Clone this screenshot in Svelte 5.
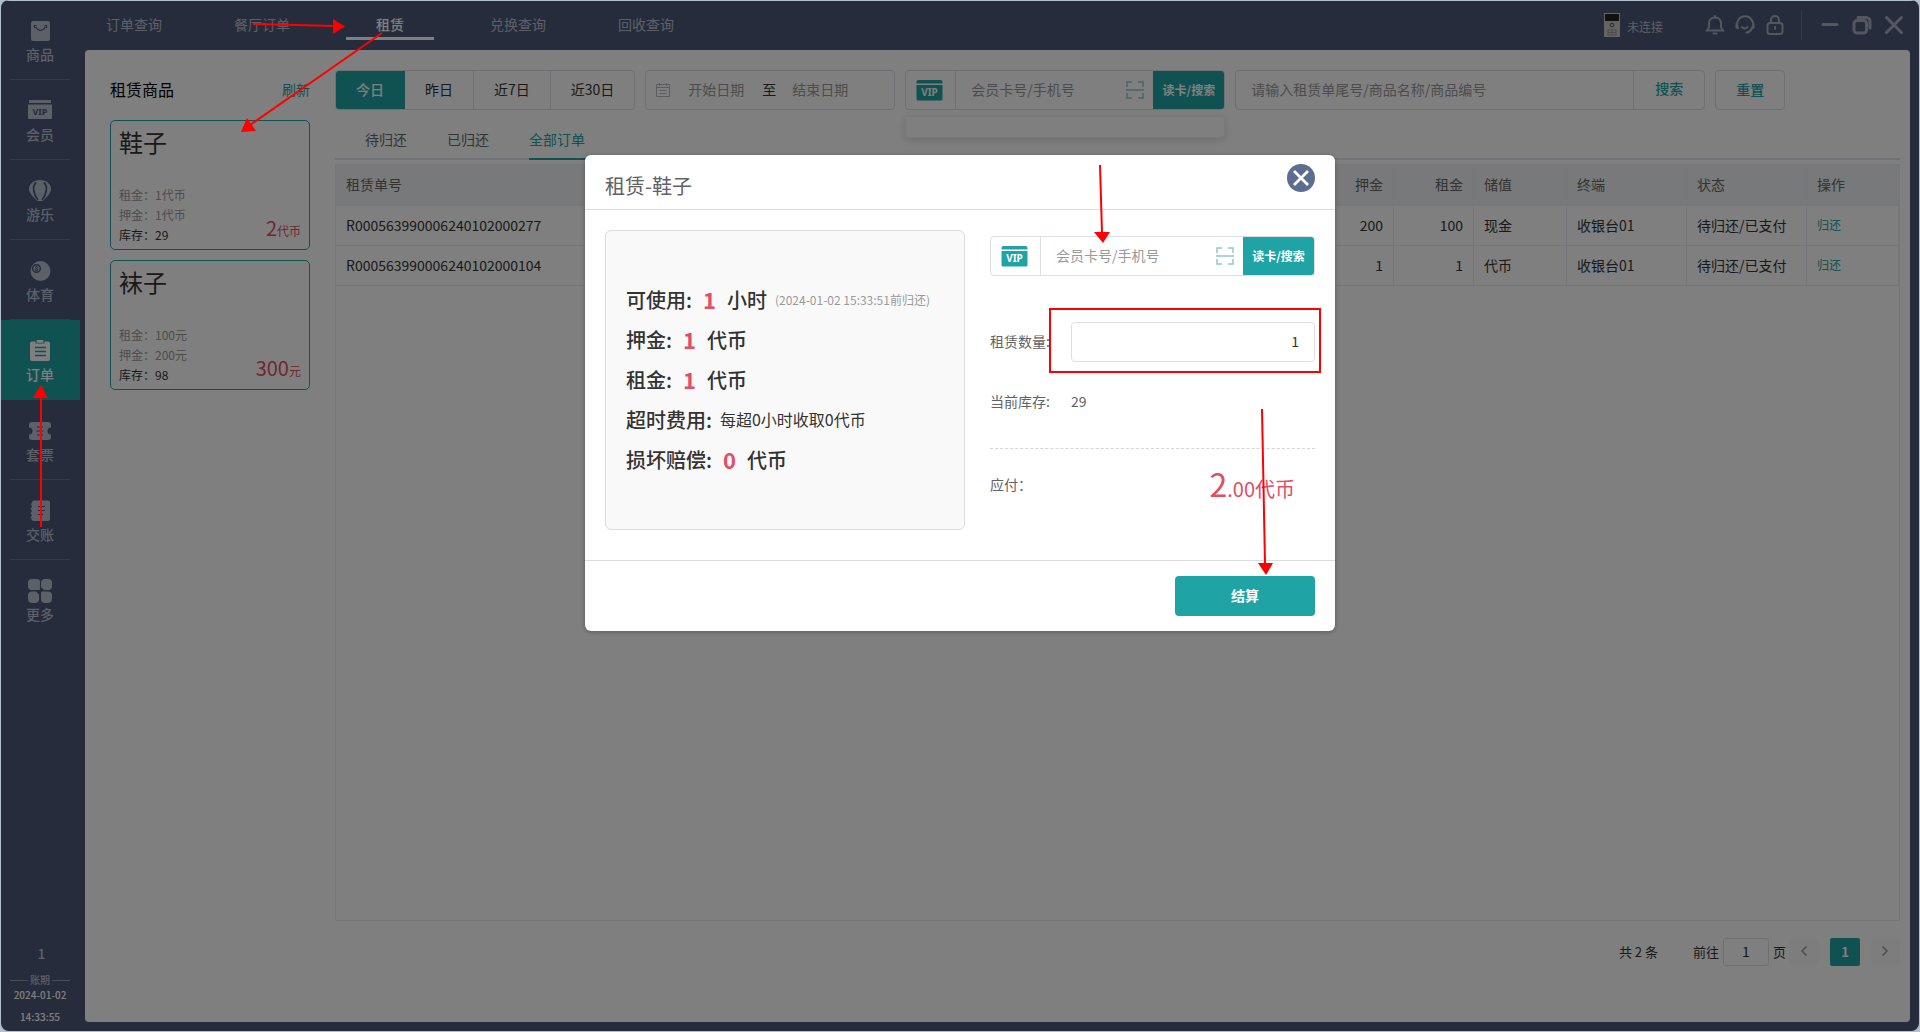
<script>
  const menu = [
    { icon: "goods", label: "商品" },
    { icon: "vip", label: "会员" },
    { icon: "balloon", label: "游乐" },
    { icon: "ball", label: "体育" },
    { icon: "order", label: "订单" },
    { icon: "ticket", label: "套票" },
    { icon: "ledger", label: "交账" },
    { icon: "more", label: "更多" },
  ];
  const navTabs = ["订单查询", "餐厅订单", "租赁", "兑换查询", "回收查询"];
  const ranges = ["今日", "昨日", "近7日", "近30日"];
  const statusTabs = ["待归还", "已归还", "全部订单"];

  const goods = [
    { name: "鞋子", rent: "1代币", deposit: "1代币", stock: 29, total: 2, unit: "代币" },
    { name: "袜子", rent: "100元", deposit: "200元", stock: 98, total: 300, unit: "元" },
  ];

  const orders = [
    { no: "R000563990006240102000277", deposit: 200, rent: 100, store: "现金", terminal: "收银台01", status: "待归还/已支付" },
    { no: "R000563990006240102000104", deposit: 1, rent: 1, store: "代币", terminal: "收银台01", status: "待归还/已支付" },
  ];

  const terms = [
    { label: "可使用:", value: 1, unit: "小时", hint: "(2024-01-02 15:33:51前归还)" },
    { label: "押金:", value: 1, unit: "代币" },
    { label: "租金:", value: 1, unit: "代币" },
    { label: "超时费用:", text: "每超0小时收取0代币" },
    { label: "损坏赔偿:", value: 0, unit: "代币" },
  ];

  let activeMenu = $state("订单");
  let activeNav = $state("租赁");
  let activeRange = $state("今日");
  let activeStatus = $state("全部订单");
  let quantity = $state(1);
  let pageNo = $state(1);
  let open = $state(true);
</script>

{#snippet menuIcon(name)}
  <svg width="26" height="26" viewBox="0 0 26 26" fill="currentColor" aria-hidden="true">
    {#if name === "goods"}
      <rect x="4" y="3" width="19" height="20" rx="2" />
      <g fill="none" stroke="#4c5878" stroke-width="1.2">
        <path d="M8.5 9Q13.5 16 18.5 9" />
        <path d="M7.5 10v-2.5h2M17.5 7.500h2v2.500" />
      </g>
    {:else if name === "vip"}
      <path d="M2 3a1 1 0 0 1 1-1h20a1 1 0 0 1 1 1v2H2z" />
      <path d="M1 6.500h24V20a1 1 0 0 1-1 1H2a1 1 0 0 1-1-1z" />
      <text x="13" y="17" text-anchor="middle" class="vip-dark">VIP</text>
    {:else if name === "balloon"}
      <path d="M13 2c6.500 0 11 4 11 9 0 4-4 8-8.500 12h-5C6 19 2 15 2 11c0-5 4.500-9 11-9z" />
      <path d="M9 4.500C4.500 9 7 17 11 22M17 4.500C21.500 9 19 17 15 22" fill="none" stroke="#4c5878" stroke-width="1.8" />
    {:else if name === "ball"}
      <circle cx="13.5" cy="13" r="10" />
      <circle cx="9.5" cy="10.5" r="3.8" fill="none" stroke="#4c5878" stroke-width="1.5" />
      <circle cx="9.5" cy="9.5" r="1" fill="none" stroke="#4c5878" />
      <circle cx="9.5" cy="11.8" r="1" fill="none" stroke="#4c5878" />
    {:else if name === "order"}
      <path d="M5 3.500h3.500v2h9v-2H21a2 2 0 0 1 2 2V21a2 2 0 0 1-2 2H5a2 2 0 0 1-2-2V5.500a2 2 0 0 1 2-2z" />
      <rect x="9.5" y="2" width="7" height="2.8" rx="1" />
      <path d="M8 9.500h11M8 13.500h11M8 17.500h11" stroke="#20a3a5" stroke-width="1.4" />
    {:else if name === "ticket"}
      <path d="M5 4h16a3 3 0 0 1 3 3v2.500a3.500 3.500 0 0 0 0 7V19a3 3 0 0 1-3 3H5a3 3 0 0 1-3-3v-2.500a3.500 3.500 0 0 0 0-7V7a3 3 0 0 1 3-3z" />
      <path d="M10 9h6M9.500 13h7M10 17h6" stroke="#4c5878" stroke-width="1.2" />
    {:else if name === "ledger"}
      <path d="M7 2.500h14a2 2 0 0 1 2 2V21a2 2 0 0 1-2 2H7a2.500 2.500 0 0 1-2.500-2.500l-1-1 1.500-2-1.500-2 1.500-2.500-1.500-2 1.500-2.500-1-2L5 4.500a2 2 0 0 1 2-2z" />
      <path d="M11 8.500h7M11 12.500h7M11 16.500h5" stroke="#4c5878" stroke-width="1.2" />
    {:else}
      <path d="M5 1h5a3 3 0 0 1 3 3v7a1 1 0 0 1-1 1H5a4 4 0 0 1-4-4V5a4 4 0 0 1 4-4z" />
      <path d="M18 1h3a4 4 0 0 1 4 4v3a4 4 0 0 1-4 4h-4l-3-3V5a4 4 0 0 1 4-4z" />
      <path d="M5 13.500h4l3 3V21a4 4 0 0 1-4 4H5a4 4 0 0 1-4-4v-3.500a4 4 0 0 1 4-4z" />
      <path d="M15 13.500h6a4 4 0 0 1 4 4V21a4 4 0 0 1-4 4h-3a4 4 0 0 1-4-4v-6.500z" />
    {/if}
  </svg>
{/snippet}

{#snippet memberSearch()}
  <div class="member">
    <span class="member-vip">
      <svg width="27" height="21" viewBox="0 0 27 21" aria-hidden="true">
        <path d="M2 0h23a2 2 0 0 1 1.500 2v1.500H.5V2A2 2 0 0 1 2 0z" fill="#20a3a5" />
        <path d="M.5 5h26v14a1.500 1.500 0 0 1-1.500 1.500H2A1.500 1.500 0 0 1 .5 19z" fill="#20a3a5" />
        <text x="13.5" y="16" text-anchor="middle" class="vip-light">VIP</text>
      </svg>
    </span>
    <input type="text" placeholder="会员卡号/手机号" aria-label="会员卡号/手机号" />
    <svg class="scan" width="18" height="18" viewBox="0 0 18 18" fill="none" stroke="#90c8c9" stroke-width="1.5" aria-hidden="true">
      <path d="M1 6V1h5M12 1h5v5M17 12v5h-5M6 17H1v-5M0 9h18" />
    </svg>
    <button class="read-card">读卡/搜索</button>
  </div>
{/snippet}

<div class="window">
  <aside class="sidebar">
    <nav class="menu">
      {#each menu as item (item.label)}
        <button class="menu-item" class:active={item.label === activeMenu} onclick={() => (activeMenu = item.label)}>
          {@render menuIcon(item.icon)}
          <span>{item.label}</span>
        </button>
      {/each}
    </nav>
    <div class="period">
      <span class="period-no">1</span>
      <span class="period-title">账期</span>
      <span class="period-date">2024-01-02</span>
      <span class="period-time">14:33:55</span>
    </div>
  </aside>

  <div class="body">
    <header class="topbar">
      <nav class="nav">
        {#each navTabs as tab (tab)}
          <button class="nav-tab" class:active={tab === activeNav} onclick={() => (activeNav = tab)}>{tab}</button>
        {/each}
      </nav>
      <div class="device">
        <svg width="16" height="24" viewBox="0 0 16 24" aria-hidden="true">
          <rect width="16" height="24" fill="#c8c8c4" />
          <rect x="1" y="1" width="14" height="7" fill="#222" />
          <circle cx="8" cy="12" r="1.8" fill="none" stroke="#555" />
          <rect x="4" y="17" width="8" height="5" fill="none" stroke="#999" />
          <path d="M4 19.500h8M8 17v5" stroke="#999" />
        </svg>
        <span>未连接</span>
      </div>
      <div class="tools">
        <button aria-label="通知">
          <svg width="20" height="20" viewBox="0 0 20 20">
            <path d="M10 2.500c-3.800 0-6 2.600-6 6v3.800L2 15.500h16l-2-3.200V8.500c0-3.400-2.200-6-6-6zM10 1v1M8.500 18.500h3" />
          </svg>
        </button>
        <button aria-label="客服">
          <svg width="20" height="20" viewBox="0 0 20 20">
            <path d="M3 13a8 8 0 1 1 14.200 0c-1.200 2.600-3 4.200-5.700 4.800M1.500 9v3.500L3 13M18.500 9v3.500L17.200 13M7 12c1.500 2 4 2 5.500 0" />
          </svg>
        </button>
        <button aria-label="锁屏">
          <svg width="20" height="20" viewBox="0 0 20 20">
            <rect x="2.5" y="8" width="15" height="11" rx="2.5" />
            <path d="M6 8V5a4 4 0 0 1 8 0v3M10 12v2" />
          </svg>
        </button>
      </div>
      <div class="controls">
        <button aria-label="最小化">
          <svg width="20" height="20" viewBox="0 0 20 20"><path d="M3 9.500h14" /></svg>
        </button>
        <button aria-label="还原">
          <svg width="20" height="20" viewBox="0 0 20 20">
            <rect x="2" y="5.5" width="12.5" height="12.5" rx="3" />
            <path d="M6 2.500h8A4 4 0 0 1 18 6.500V13" />
          </svg>
        </button>
        <button aria-label="关闭窗口">
          <svg width="20" height="20" viewBox="0 0 20 20"><path d="M2.500 2.500l15 15M17.500 2.500l-15 15" /></svg>
        </button>
      </div>
    </header>

    <main class="panel">
      <section class="goods">
        <div class="goods-head">
          <h2>租赁商品</h2>
          <button class="link">刷新</button>
        </div>
        {#each goods as item (item.name)}
          <button class="goods-card">
            <span class="goods-name">{item.name}</span>
            <span class="goods-foot">
              <span class="goods-info">
                <span>租金：{item.rent}</span>
                <span>押金：{item.deposit}</span>
                <span class="stock">库存：{item.stock}</span>
              </span>
              <span class="goods-price"><b>{item.total}</b>{item.unit}</span>
            </span>
          </button>
        {/each}
      </section>

      <section class="orders">
        <div class="filters">
          <div class="ranges">
            {#each ranges as range (range)}
              <button class:active={range === activeRange} onclick={() => (activeRange = range)}>{range}</button>
            {/each}
          </div>
          <div class="dates">
            <svg width="14" height="14" viewBox="0 0 14 14" fill="none" stroke="#b4b8c0" aria-hidden="true">
              <path d="M.5 1.500h13v12H.5zM.5 4.500h13M3.500 0v3M10.500 0v3M3.500 7.500h7M3.500 10.500h7" />
            </svg>
            <input type="text" placeholder="开始日期" aria-label="开始日期" />
            <span>至</span>
            <input type="text" placeholder="结束日期" aria-label="结束日期" />
          </div>
          <div class="member-box">
            {@render memberSearch()}
            <div class="suggestions"></div>
          </div>
          <div class="keyword">
            <input type="text" placeholder="请输入租赁单尾号/商品名称/商品编号" aria-label="关键字" />
            <button>搜索</button>
          </div>
          <button class="reset">重置</button>
        </div>

        <div class="status-tabs">
          {#each statusTabs as tab (tab)}
            <button class:active={tab === activeStatus} onclick={() => (activeStatus = tab)}>{tab}</button>
          {/each}
        </div>

        <div class="table-wrap">
          <table>
            <colgroup>
              <col />
              <col class="w80" />
              <col class="w80" />
              <col class="w93" />
              <col class="w120" />
              <col class="w120" />
              <col class="w92" />
            </colgroup>
            <thead>
              <tr>
                <th>租赁单号</th>
                <th class="num">押金</th>
                <th class="num">租金</th>
                <th>储值</th>
                <th>终端</th>
                <th>状态</th>
                <th>操作</th>
              </tr>
            </thead>
            <tbody>
              {#each orders as order (order.no)}
                <tr>
                  <td>{order.no}</td>
                  <td class="num">{order.deposit}</td>
                  <td class="num">{order.rent}</td>
                  <td>{order.store}</td>
                  <td>{order.terminal}</td>
                  <td>{order.status}</td>
                  <td><button class="link small">归还</button></td>
                </tr>
              {/each}
            </tbody>
          </table>
        </div>

        <div class="pager">
          <span class="total">共 2 条</span>
          <label for="page-no">前往</label>
          <input id="page-no" type="text" bind:value={pageNo} />
          <span>页</span>
          <button class="step prev" aria-label="上一页">
            <svg width="8" height="12" viewBox="0 0 8 12"><path d="M6.500 1.500L2 6l4.500 4.500" /></svg>
          </button>
          <button class="current">1</button>
          <button class="step" aria-label="下一页">
            <svg width="8" height="12" viewBox="0 0 8 12"><path d="M1.500 1.500L6 6l-4.500 4.500" /></svg>
          </button>
        </div>
      </section>
    </main>
  </div>

  {#if open}
    <div class="mask">
      <div class="dialog" role="dialog" aria-labelledby="dialog-title">
        <div class="dialog-head">
          <h1 id="dialog-title">租赁-鞋子</h1>
          <button class="close" aria-label="关闭" onclick={() => (open = false)}>
            <svg width="28" height="28" viewBox="0 0 28 28" fill="none" stroke="#fff" stroke-width="2.8">
              <path d="M7 7l14 14M21 7L7 21" />
            </svg>
          </button>
        </div>
        <div class="dialog-body">
          <div class="terms">
            {#each terms as term (term.label)}
              <div class="term">
                <span>{term.label}</span>
                {#if term.text}
                  <span class="term-text">{term.text}</span>
                {:else}
                  <span class="term-value">{term.value}</span>
                  <span>{term.unit}</span>
                {/if}
                {#if term.hint}
                  <span class="term-hint">{term.hint}</span>
                {/if}
              </div>
            {/each}
          </div>
          <div class="form">
            {@render memberSearch()}
            <div class="field qty">
              <label for="quantity">租赁数量:</label>
              <input id="quantity" type="text" bind:value={quantity} />
            </div>
            <div class="field stock-row">
              <span class="field-name">当前库存:</span>
              <span class="field-value">29</span>
            </div>
            <div class="payable">
              <span>应付：</span>
              <span class="amount"><b>2</b>.00代币</span>
            </div>
          </div>
        </div>
        <div class="dialog-foot">
          <button class="settle">结算</button>
        </div>
      </div>
    </div>
  {/if}
</div>

<svg class="marks" aria-hidden="true">
  <g stroke="#f00" stroke-width="2" fill="none">
    <path d="M253 24L335 26" />
    <path d="M382 33L250 125" />
    <path d="M41 527V396" />
    <path d="M1100 165L1102 233" />
    <path d="M1262 409L1265 564" />
    <rect x="1050" y="309" width="270" height="63" />
  </g>
  <g fill="#f00">
    <path d="M333 19L345 26.500L333 34z" />
    <path d="M247 118L256 131L241 132z" />
    <path d="M33 398L41 385L48 398z" />
    <path d="M1094 232H1110L1103 243z" />
    <path d="M1258 563H1273L1266 575z" />
  </g>
</svg>

<style>
  :global(body) {
    margin: 0;
    background: #b4bfce;
    font-family: "Noto Sans CJK SC", "Noto Sans", sans-serif;
    font-size: 14px;
    color: #333;
  }

  button,
  input {
    font-family: inherit;
    font-size: inherit;
    color: inherit;
    margin: 0;
    padding: 0 0 2px;
    border: none;
    background: none;
    box-sizing: border-box;
    outline: none;
  }

  button {
    cursor: pointer;
  }

  input {
    min-width: 0;
  }

  input::placeholder {
    color: #999;
    opacity: 1;
  }

  .window {
    position: relative;
    display: flex;
    min-height: calc(100vh - 1px);
    margin: 0 1px;
    border-radius: 8px;
    background: #4c5878;
    overflow: hidden;
  }

  /* sidebar */
  .sidebar {
    display: flex;
    flex-direction: column;
    justify-content: space-between;
    width: 79px;
    color: #b8c0d0;
  }

  .menu {
    display: flex;
    flex-direction: column;
  }

  .menu-item {
    position: relative;
    display: flex;
    flex-direction: column;
    align-items: center;
    width: 100%;
    height: 80px;
    padding: 18px 1px 0 0;
    line-height: 20px;
    font-weight: 500;
  }

  .menu-item:not(:last-child)::after {
    content: "";
    position: absolute;
    left: 9px;
    right: 10px;
    bottom: 0;
    height: 1px;
    background: #6d7790;
  }

  .menu-item.active {
    background: #20a3a5;
    color: #fff;
  }

  .menu-item.active::after {
    display: none;
  }

  .vip-dark,
  .vip-light {
    font: 700 9px "Noto Sans", sans-serif;
    fill: #4c5878;
  }

  .vip-light {
    font-size: 10px;
    fill: #fff;
  }

  .period {
    display: flex;
    flex-direction: column;
    align-items: center;
    font-size: 10px;
    font-weight: 500;
    padding: 0 1px 5px 0;
  }

  .period-no {
    font-size: 14px;
    line-height: 20px;
    padding-left: 3px;
    margin-bottom: 11px;
  }

  .period-title {
    display: flex;
    align-items: center;
    gap: 2px;
    width: 60px;
    line-height: 12px;
  }

  .period-title::before,
  .period-title::after {
    content: "";
    flex: 1;
    height: 1px;
    background: #909ab0;
  }

  .period-date,
  .period-time {
    line-height: 18px;
    color: #fff;
  }

  .period-time {
    margin-top: 4px;
  }

  .body {
    flex: 1;
    min-width: 0;
    display: flex;
    flex-direction: column;
    padding: 0 9px 9px 5px;
  }

  /* top bar */
  .topbar {
    display: flex;
    align-items: center;
    height: 50px;
    color: #b8c0d0;
  }

  .nav {
    display: flex;
    gap: 40px;
    flex: 1;
    padding-left: 5px;
  }

  .nav-tab {
    width: 88px;
    height: 30px;
    padding: 1px 0 0;
    border-bottom: 3px solid transparent;
    line-height: 20px;
  }

  .nav-tab.active {
    color: #fff;
    font-weight: 500;
    border-color: #fff;
  }

  .device {
    display: flex;
    align-items: center;
    gap: 7px;
    font-size: 12px;
    margin-right: 42px;
  }

  .device span {
    padding-top: 2px;
  }

  .tools,
  .controls {
    display: flex;
    align-items: center;
    gap: 10px;
    height: 30px;
  }

  .tools button,
  .controls button {
    display: flex;
    padding: 0;
  }

  .tools {
    padding-right: 16px;
    border-right: 1px solid #6d7790;
  }

  .controls {
    gap: 12px;
    padding: 0 6px 0 18px;
  }

  .tools svg,
  .controls svg {
    fill: none;
    stroke: #a8afbf;
    stroke-width: 2;
    stroke-linecap: round;
  }

  .controls svg {
    stroke-width: 3;
  }

  /* content */
  .panel {
    flex: 1;
    display: flex;
    gap: 25px;
    padding: 20px 10px 20px 25px;
    border-radius: 4px;
    background: #fff;
  }

  .goods {
    width: 200px;
    display: flex;
    flex-direction: column;
    gap: 10px;
  }

  .goods-head {
    display: flex;
    align-items: center;
    justify-content: space-between;
    height: 40px;
  }

  h2 {
    margin: 0;
    padding-bottom: 2px;
    font-size: 16px;
    font-weight: 400;
    color: #000;
  }

  .link {
    color: #20a3a5;
  }

  .small {
    font-size: 12px;
  }

  .goods-card {
    display: flex;
    flex-direction: column;
    justify-content: space-between;
    height: 130px;
    padding: 3px 8px 4px;
    border: 1px solid #20a3a5;
    border-radius: 5px;
    text-align: left;
  }

  .goods-name {
    font-size: 24px;
    line-height: 36px;
  }

  .goods-foot {
    display: flex;
    justify-content: space-between;
    align-items: flex-end;
    width: 100%;
    font-size: 12px;
  }

  .goods-info {
    display: flex;
    flex-direction: column;
    line-height: 20px;
    color: #999;
  }

  .stock {
    color: #333;
  }

  .goods-price {
    line-height: 28px;
    color: #e34d65;
  }

  .goods-price b {
    font-size: 20px;
    font-weight: 400;
  }

  .orders {
    flex: 1;
    min-width: 0;
    display: flex;
    flex-direction: column;
  }

  .filters {
    display: flex;
    gap: 10px;
    height: 40px;
  }

  .ranges {
    display: flex;
    border: 1px solid #dcdfe6;
    border-radius: 4px;
    overflow: hidden;
  }

  .ranges button {
    padding: 0 20px 2px;
    border-right: 1px solid #dcdfe6;
  }

  .ranges button:last-child {
    border-right: none;
  }

  .ranges .active {
    background: #20a3a5;
    border-color: #20a3a5;
    color: #fff;
    font-weight: 500;
  }

  .dates {
    display: flex;
    align-items: center;
    width: 250px;
    padding: 0 10px;
    border: 1px solid #dcdfe6;
    border-radius: 4px;
    box-sizing: border-box;
  }

  .dates input {
    width: 86px;
    margin-left: 3px;
    text-align: center;
  }

  .dates input:last-child {
    width: 82px;
    margin-left: 0;
  }

  .dates span {
    width: 20px;
    padding-bottom: 2px;
    text-align: center;
  }

  .member-box {
    position: relative;
    width: 320px;
  }

  .suggestions {
    position: absolute;
    top: 46px;
    left: 0;
    right: 0;
    height: 22px;
    border: 1px solid #f0f2f5;
    border-radius: 4px;
    box-sizing: border-box;
    box-shadow: 0 2px 8px rgba(0, 0, 0, 0.15);
  }

  .member {
    display: flex;
    align-items: center;
    height: 40px;
    border: 1px solid #dcdfe6;
    border-radius: 4px;
    box-sizing: border-box;
    overflow: hidden;
  }

  .member-vip {
    display: flex;
    align-items: center;
    justify-content: center;
    width: 47px;
    height: 100%;
    padding-right: 2px;
    border-right: 1px solid #dcdfe6;
  }

  .member input {
    flex: 1;
    height: 100%;
    padding-left: 15px;
  }

  .scan {
    margin-right: 9px;
  }

  .read-card {
    width: 71px;
    height: 100%;
    background: #20a3a5;
    color: #fff;
    font-size: 12px;
    font-weight: 700;
  }

  .keyword {
    display: flex;
    width: 470px;
    border: 1px solid #dcdfe6;
    border-radius: 4px;
    box-sizing: border-box;
  }

  .keyword input {
    flex: 1;
    padding-left: 15px;
  }

  .keyword button {
    width: 71px;
    padding-bottom: 4px;
    border-left: 1px solid #dcdfe6;
    color: #20a3a5;
    font-weight: 500;
  }

  .reset {
    width: 70px;
    border: 1px solid #dcdfe6;
    border-radius: 4px;
    color: #20a3a5;
    font-weight: 500;
  }

  .status-tabs {
    display: flex;
    gap: 40px;
    height: 50px;
    padding-left: 30px;
    box-shadow: inset 0 -2px #e4e7ed;
  }

  .status-tabs button {
    padding-top: 15px;
    padding-bottom: 6px;
    border-bottom: 2px solid transparent;
    color: #666;
  }

  .status-tabs .active {
    color: #20a3a5;
    border-color: #20a3a5;
  }

  .table-wrap {
    flex: 1;
    margin-top: 4px;
    border: 1px solid #ebeef5;
  }

  table {
    width: 100%;
    border-collapse: collapse;
    table-layout: fixed;
  }

  .w80 {
    width: 80px;
  }

  .w92 {
    width: 92px;
  }

  .w93 {
    width: 93px;
  }

  .w120 {
    width: 120px;
  }

  th,
  td {
    height: 37px;
    padding: 0 10px 2px;
    border-right: 1px solid #ebeef5;
    border-bottom: 1px solid #ebeef5;
    text-align: left;
    font-weight: 400;
  }

  th {
    height: 38px;
    background: #f0f3f7;
    color: #666;
  }

  .num {
    text-align: right;
  }

  .pager {
    display: flex;
    align-items: center;
    height: 28px;
    margin-top: 17px;
    margin-bottom: 36px;
    justify-content: flex-end;
    font-size: 13px;
  }

  .pager span,
  .pager label {
    padding-bottom: 2px;
  }

  .total {
    margin-right: 35px;
  }

  .pager input {
    width: 46px;
    height: 28px;
    margin: 0 4px;
    border: 1px solid #dcdfe6;
    border-radius: 3px;
    font-size: 14px;
    text-align: center;
  }

  .step,
  .current {
    width: 30px;
    height: 28px;
    border-radius: 2px;
    background: #fafafa;
  }

  .step.prev {
    margin-left: 3px;
  }

  .step svg {
    fill: none;
    stroke: #999;
    stroke-width: 1.5;
  }

  .current {
    margin: 0 10px 0 11px;
    background: #20a3a5;
    color: #fff;
    font-weight: 700;
  }

  /* dialog */
  .mask {
    position: absolute;
    inset: 0;
    padding-top: 154px;
    border-top: 1px solid #b4bfce;
    background: rgba(0, 0, 0, 0.5);
  }

  .dialog {
    width: 750px;
    margin: 0 auto;
    border-radius: 6px;
    background: #fff;
    box-shadow: 0 1px 4px rgba(0, 0, 0, 0.3);
    color: #606266;
  }

  .dialog-head {
    display: flex;
    justify-content: space-between;
    height: 54px;
    padding: 0 20px;
    border-bottom: 1px solid #dcdcdc;
  }

  h1 {
    margin: 0;
    padding-top: 16px;
    font-size: 20px;
    font-weight: 400;
    line-height: 30px;
  }

  .close {
    width: 28px;
    height: 28px;
    margin-top: 9px;
    padding: 0;
    border-radius: 50%;
    background: #5d6d91;
  }

  .close svg {
    display: block;
  }

  .dialog-body {
    display: flex;
    gap: 25px;
    padding: 20px 20px 30px;
  }

  .terms {
    display: flex;
    flex-direction: column;
    justify-content: center;
    width: 360px;
    height: 300px;
    padding: 0 0 2px 20px;
    border: 1px solid #dcdcdc;
    border-radius: 6px;
    box-sizing: border-box;
    background: #f9f9f9;
  }

  .term {
    display: flex;
    align-items: center;
    height: 40px;
    font-size: 20px;
    font-weight: 500;
    color: #333;
  }

  .term-value {
    margin: 0 11px;
    font-size: 22px;
    font-weight: 700;
    color: #e34d65;
  }

  .term-text {
    margin-left: 8px;
    font-size: 16px;
    font-weight: 400;
  }

  .term-hint {
    margin-left: 8px;
    font-size: 12px;
    font-weight: 400;
    color: #999;
  }

  .form {
    flex: 1;
    padding-top: 6px;
  }

  .field {
    display: flex;
    align-items: center;
    height: 40px;
  }

  .field label,
  .field-name {
    width: 81px;
    padding-bottom: 2px;
  }

  .field-value {
    padding-bottom: 2px;
  }

  .qty {
    margin-top: 46px;
  }

  .qty input {
    flex: 1;
    height: 40px;
    padding: 0 15px 2px;
    border: 1px solid #dcdfe6;
    border-radius: 4px;
    text-align: right;
    color: #333;
  }

  .stock-row {
    margin-top: 20px;
  }

  .payable {
    display: flex;
    align-items: center;
    justify-content: space-between;
    height: 70px;
    margin-top: 26px;
    padding-right: 20px;
    border-top: 1px dashed #d5d5d5;
  }

  .amount {
    padding-bottom: 2px;
    font-size: 20px;
    color: #e34d65;
  }

  .amount b {
    font-size: 32px;
    font-weight: 400;
  }

  .dialog-foot {
    display: flex;
    justify-content: flex-end;
    padding: 15px 20px;
    border-top: 1px solid #dcdcdc;
  }

  .settle {
    width: 140px;
    height: 40px;
    border-radius: 4px;
    background: #20a3a5;
    color: #fff;
    font-weight: 700;
  }

  .marks {
    position: absolute;
    top: 0;
    left: 0;
    width: 100%;
    height: 100%;
    pointer-events: none;
  }
</style>
